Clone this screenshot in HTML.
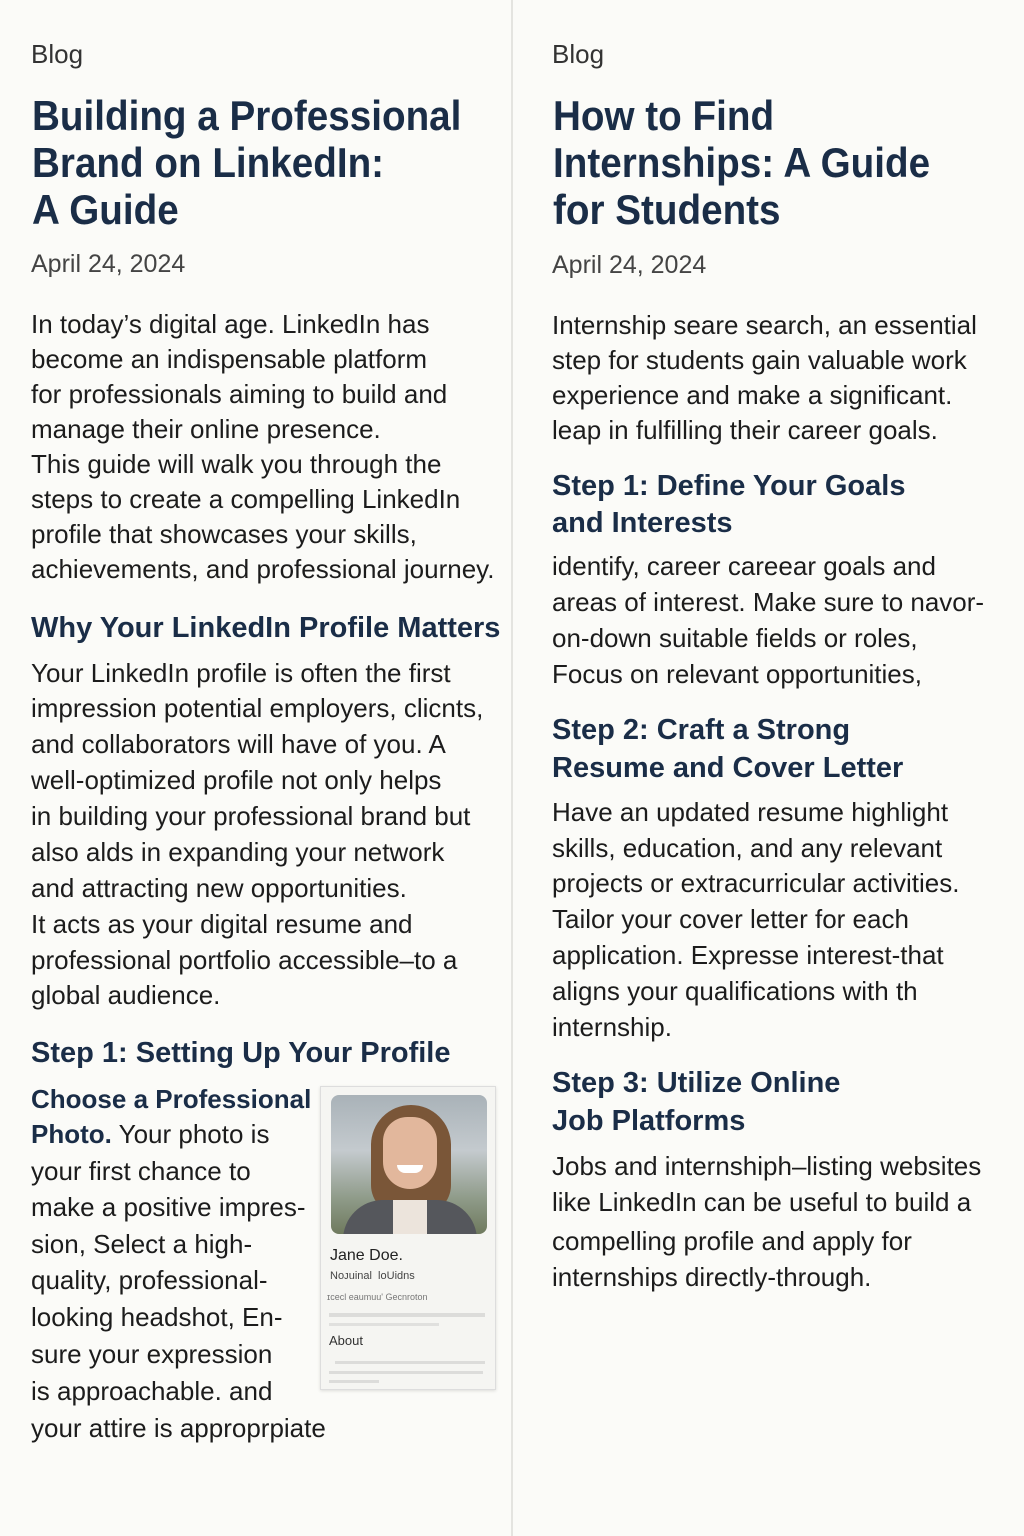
<!DOCTYPE html>
<html><head><meta charset="utf-8"><style>
html,body{margin:0;padding:0;}
body{width:1024px;height:1536px;background:#fbfbf8;position:relative;overflow:hidden;font-family:"Liberation Sans",sans-serif;}
.l{position:absolute;white-space:nowrap;line-height:36px;transform-origin:0 50%;}
.b{font-size:26px;color:#1c1c1c;transform:scaleX(1.0);}
.blog{font-size:26px;color:#333;transform:scaleX(1.0);}
.date{font-size:25px;color:#444;transform:scaleX(1.0);}
.t{font-size:42px;font-weight:bold;color:#1a2d47;line-height:48px;transform:scaleX(0.92);}
.h{font-size:29px;font-weight:bold;color:#1a2d47;transform:scaleX(1.0);}
.s{color:#1a2d47;font-weight:bold;}
.div{position:absolute;left:511px;top:0;width:2px;height:1536px;background:#e4e4e0;}
</style></head><body>
<div class="div"></div>

<div class="l blog" style="left:31px;top:36px">Blog</div>
<div class="l t" style="left:32px;top:92px">Building a Professional</div>
<div class="l t" style="left:32px;top:139px">Brand on LinkedIn:</div>
<div class="l t" style="left:32px;top:186px">A Guide</div>
<div class="l date" style="left:31px;top:246px">April 24, 2024</div>

<div class="l b" style="left:31px;top:306px">In today’s digital age. LinkedIn has</div>
<div class="l b" style="left:31px;top:341px">become an indispensable platform</div>
<div class="l b" style="left:31px;top:376px">for professionals aiming to build and</div>
<div class="l b" style="left:31px;top:411px">manage their online presence.</div>
<div class="l b" style="left:31px;top:446px">This guide will walk you through the</div>
<div class="l b" style="left:31px;top:481px">steps to create a compelling LinkedIn</div>
<div class="l b" style="left:31px;top:516px">profile that showcases your skills,</div>
<div class="l b" style="left:31px;top:551px">achievements, and professional journey.</div>

<div class="l h" style="left:31px;top:610px">Why Your LinkedIn Profile Matters</div>
<div class="l b" style="left:31px;top:655px">Your LinkedIn profile is often the first</div>
<div class="l b" style="left:31px;top:690px">impression potential employers, clicnts,</div>
<div class="l b" style="left:31px;top:726px">and collaborators will have of you. A</div>
<div class="l b" style="left:31px;top:762px">well-optimized profile not only helps</div>
<div class="l b" style="left:31px;top:798px">in building your professional brand but</div>
<div class="l b" style="left:31px;top:834px">also alds in expanding your network</div>
<div class="l b" style="left:31px;top:870px">and attracting new opportunities.</div>
<div class="l b" style="left:31px;top:906px">It acts as your digital resume and</div>
<div class="l b" style="left:31px;top:942px">professional portfolio accessible–to a</div>
<div class="l b" style="left:31px;top:977px">global audience.</div>

<div class="l h" style="left:31px;top:1035px">Step 1: Setting Up Your Profile</div>
<div class="l b" style="left:31px;top:1081px"><span class="s">Choose a Professional</span></div>
<div class="l b" style="left:31px;top:1116px"><span class="s">Photo.</span> Your photo is</div>
<div class="l b" style="left:31px;top:1153px">your first chance to</div>
<div class="l b" style="left:31px;top:1189px">make a positive impres-</div>
<div class="l b" style="left:31px;top:1226px">sion, Select a high-</div>
<div class="l b" style="left:31px;top:1262px">quality, professional-</div>
<div class="l b" style="left:31px;top:1299px">looking headshot, En-</div>
<div class="l b" style="left:31px;top:1336px">sure your expression</div>
<div class="l b" style="left:31px;top:1373px">is approachable. and</div>
<div class="l b" style="left:31px;top:1410px">your attire is approprpiate</div>

<!-- card -->
<div style="position:absolute;left:320px;top:1086px;width:174px;height:302px;background:#f5f5f2;border:1px solid #ddd;box-shadow:0 1px 3px rgba(0,0,0,0.12);">
 <div style="position:absolute;left:10px;top:8px;width:156px;height:139px;border-radius:8px;overflow:hidden;background:linear-gradient(180deg,#a9b2b8 0%,#c4cace 40%,#8e9a88 75%,#6f7a5e 100%);">
  <div style="position:absolute;left:40px;top:10px;width:80px;height:110px;border-radius:40px 40px 30px 30px;background:#7a5638;"></div>
  <div style="position:absolute;left:52px;top:22px;width:54px;height:72px;border-radius:27px 27px 30px 30px;background:#e2b79c;"></div>
  <div style="position:absolute;left:66px;top:70px;width:26px;height:8px;border-radius:0 0 13px 13px;background:#fff;"></div>
  <div style="position:absolute;left:12px;top:105px;width:134px;height:50px;border-radius:40px 40px 0 0;background:#55575c;"></div>
  <div style="position:absolute;left:62px;top:105px;width:34px;height:40px;background:#ece4dc;border-radius:0 0 6px 6px;"></div>
 </div>
 <div style="position:absolute;left:9px;top:160px;font-size:16px;color:#222;">Jane Doe.</div>
 <div style="position:absolute;left:9px;top:183px;font-size:11px;color:#444;">Noᴊuinal &nbsp;loUidns</div>
 <div style="position:absolute;left:6px;top:205px;font-size:9px;color:#777;">ɪcecl eaumuu' Gecnroton</div>
 <div style="position:absolute;left:8px;top:226px;width:156px;height:4px;background:#dcdcda;"></div>
 <div style="position:absolute;left:8px;top:236px;width:110px;height:3px;background:#e0e0de;"></div>
 <div style="position:absolute;left:8px;top:246px;font-size:13px;color:#333;">About</div>
 <div style="position:absolute;left:14px;top:274px;width:150px;height:3px;background:#dcdcda;"></div>
 <div style="position:absolute;left:8px;top:284px;width:154px;height:3px;background:#dcdcda;"></div>
 <div style="position:absolute;left:8px;top:293px;width:50px;height:3px;background:#dcdcda;"></div>
</div>

<!-- right column -->
<div class="l blog" style="left:552px;top:36px">Blog</div>
<div class="l t" style="left:553px;top:92px">How to Find</div>
<div class="l t" style="left:553px;top:139px">Internships: A Guide</div>
<div class="l t" style="left:553px;top:186px">for Students</div>
<div class="l date" style="left:552px;top:247px">April 24, 2024</div>

<div class="l b" style="left:552px;top:307px">Internship seare search, an essential</div>
<div class="l b" style="left:552px;top:342px">step for students gain valuable work</div>
<div class="l b" style="left:552px;top:377px">experience and make a significant.</div>
<div class="l b" style="left:552px;top:412px">leap in fulfilling their career goals.</div>

<div class="l h" style="left:552px;top:468px">Step 1: Define Your Goals</div>
<div class="l h" style="left:552px;top:505px">and Interests</div>
<div class="l b" style="left:552px;top:548px">identify, career careear goals and</div>
<div class="l b" style="left:552px;top:584px">areas of interest. Make sure to navor-</div>
<div class="l b" style="left:552px;top:620px">on-down suitable fields or roles,</div>
<div class="l b" style="left:552px;top:656px">Focus on relevant opportunities,</div>

<div class="l h" style="left:552px;top:712px">Step 2: Craft a Strong</div>
<div class="l h" style="left:552px;top:750px">Resume and Cover Letter</div>
<div class="l b" style="left:552px;top:794px">Have an updated resume highlight</div>
<div class="l b" style="left:552px;top:830px">skills, education, and any relevant</div>
<div class="l b" style="left:552px;top:865px">projects or extracurricular activities.</div>
<div class="l b" style="left:552px;top:901px">Tailor your cover letter for each</div>
<div class="l b" style="left:552px;top:937px">application. Expresse interest-that</div>
<div class="l b" style="left:552px;top:973px">aligns your qualifications with th</div>
<div class="l b" style="left:552px;top:1009px">internship.</div>

<div class="l h" style="left:552px;top:1065px">Step 3: Utilize Online</div>
<div class="l h" style="left:552px;top:1103px">Job Platforms</div>
<div class="l b" style="left:552px;top:1148px">Jobs and internshiph–listing websites</div>
<div class="l b" style="left:552px;top:1184px">like LinkedIn can be useful to build a</div>
<div class="l b" style="left:552px;top:1223px">compelling profile and apply for</div>
<div class="l b" style="left:552px;top:1259px">internships directly-through.</div>
</body></html>
